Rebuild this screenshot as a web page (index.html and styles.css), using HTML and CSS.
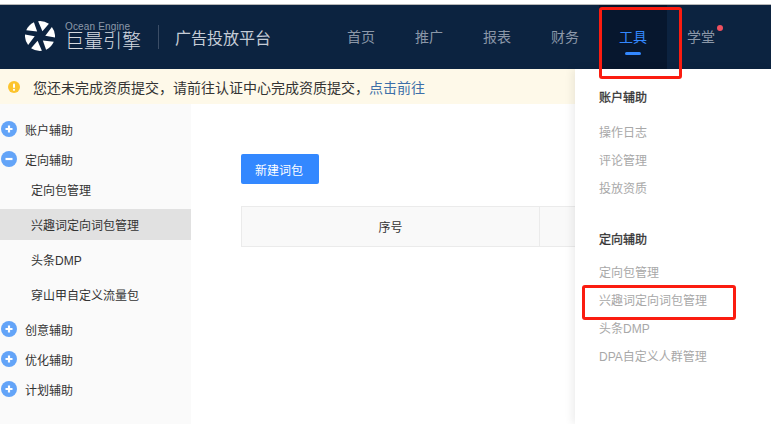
FILE: index.html
```html
<!DOCTYPE html>
<html lang="zh-CN">
<head>
<meta charset="utf-8">
<title>巨量引擎 广告投放平台</title>
<link rel="stylesheet" href="styles.css">
</head>
<body>
<div class="page">
  <div class="top-strip"></div>
  <header class="header">
    <div class="brand">
      <svg class="brand-mark" viewBox="-16 -16 32 32" aria-hidden="true">
        <g fill="#fff">
          <path d="M-2 -15.8 Q4 -16.6 9.5 -13 L2.6 -5 Z"/>
          <path transform="rotate(60)" d="M-2 -15.8 Q4 -16.6 9.5 -13 L2.6 -5 Z"/>
          <path transform="rotate(120)" d="M-2 -15.8 Q4 -16.6 9.5 -13 L2.6 -5 Z"/>
          <path transform="rotate(180)" d="M-2 -15.8 Q4 -16.6 9.5 -13 L2.6 -5 Z"/>
          <path transform="rotate(240)" d="M-2 -15.8 Q4 -16.6 9.5 -13 L2.6 -5 Z"/>
          <path transform="rotate(300)" d="M-2 -15.8 Q4 -16.6 9.5 -13 L2.6 -5 Z"/>
        </g>
      </svg>
      <div class="brand-words">
        <span class="brand-en">Ocean Engine</span>
        <span class="brand-zh">巨量引擎</span>
      </div>
      <span class="brand-divider"></span>
      <span class="brand-title">广告投放平台</span>
    </div>
    <nav class="nav">
      <a class="nav-item">首页</a>
      <a class="nav-item">推广</a>
      <a class="nav-item">报表</a>
      <a class="nav-item">财务</a>
      <a class="nav-item is-active">工具</a>
      <a class="nav-item has-dot">学堂</a>
    </nav>
  </header>
  <div class="notice">
    <svg class="notice-icon" viewBox="0 0 12 12" aria-hidden="true">
      <circle cx="6" cy="6" r="6" fill="#fcc42e"/>
      <rect x="5" y="2.4" width="2" height="4.6" rx="1" fill="#fff"/>
      <circle cx="6" cy="8.8" r="1.1" fill="#fff"/>
    </svg>
    <span>您还未完成资质提交，请前往认证中心完成资质提交，<a class="notice-link">点击前往</a></span>
  </div>
  <div class="body-row">
    <aside class="sidebar">
      <div class="side-group">
        <span class="toggle"><svg viewBox="0 0 16 16"><circle cx="8" cy="8" r="8" fill="#63a4f8"/><path d="M4.5 8h7M8 4.5v7" stroke="#fff" stroke-width="2.2"/></svg></span>账户辅助
      </div>
      <div class="side-group">
        <span class="toggle"><svg viewBox="0 0 16 16"><circle cx="8" cy="8" r="8" fill="#63a4f8"/><path d="M4.5 8h7" stroke="#fff" stroke-width="2.2"/></svg></span>定向辅助
      </div>
      <div class="side-children">
        <div class="side-child">定向包管理</div>
        <div class="side-child is-current">兴趣词定向词包管理</div>
        <div class="side-child">头条DMP</div>
        <div class="side-child">穿山甲自定义流量包</div>
      </div>
      <div class="side-group">
        <span class="toggle"><svg viewBox="0 0 16 16"><circle cx="8" cy="8" r="8" fill="#63a4f8"/><path d="M4.5 8h7M8 4.5v7" stroke="#fff" stroke-width="2.2"/></svg></span>创意辅助
      </div>
      <div class="side-group">
        <span class="toggle"><svg viewBox="0 0 16 16"><circle cx="8" cy="8" r="8" fill="#63a4f8"/><path d="M4.5 8h7M8 4.5v7" stroke="#fff" stroke-width="2.2"/></svg></span>优化辅助
      </div>
      <div class="side-group">
        <span class="toggle"><svg viewBox="0 0 16 16"><circle cx="8" cy="8" r="8" fill="#63a4f8"/><path d="M4.5 8h7M8 4.5v7" stroke="#fff" stroke-width="2.2"/></svg></span>计划辅助
      </div>
    </aside>
    <main class="main">
      <button class="primary-btn">新建词包</button>
      <div class="table-head">
        <div class="cell cell-index">序号</div>
        <div class="cell cell-rest"></div>
      </div>
    </main>
  </div>
  <div class="dropdown">
    <h4 class="drop-title">账户辅助</h4>
    <a class="drop-item">操作日志</a>
    <a class="drop-item">评论管理</a>
    <a class="drop-item">投放资质</a>
    <h4 class="drop-title drop-title-second">定向辅助</h4>
    <a class="drop-item">定向包管理</a>
    <a class="drop-item">兴趣词定向词包管理</a>
    <a class="drop-item">头条DMP</a>
    <a class="drop-item">DPA自定义人群管理</a>
  </div>
  <div class="mark mark-nav"></div>
  <div class="mark mark-item"></div>
</div>
</body>
</html>
```

FILE: styles.css
```css
* { box-sizing: border-box; }
html, body { margin: 0; padding: 0; background: #fff; }
body { font-family: "Liberation Sans", "Noto Sans CJK SC", sans-serif; font-size: 12px; color: #333; }
.page { position: relative; width: 771px; height: 424px; overflow: hidden; display: flex; flex-direction: column; }

.top-strip { height: 5px; flex: none; background: #fff; border-bottom: 1px solid #b8b8b8; }

.header { height: 64px; flex: none; background: #0c2340; display: flex; align-items: stretch; padding-left: 25px; }
.brand { display: flex; align-items: center; width: 302px; flex: none; padding-bottom: 2px; }
.brand-mark { width: 30px; height: 32px; flex: none; margin-right: 10px; }
.brand-words { display: flex; flex-direction: column; width: 93px; flex: none; color: #fff; }
.brand-en { font-size: 10px; line-height: 11px; letter-spacing: .15px; color: #8d99a9; font-family: "Liberation Sans", sans-serif; }
.brand-zh { font-size: 19px; line-height: 20px; font-weight: 300; color: #d5dae1; }
.brand-divider { width: 1px; height: 24px; background: #3b4d66; flex: none; margin: 2px 16px 0 0; }
.brand-title { font-size: 16px; color: #c5ccd6; white-space: nowrap; padding-top: 1px; }

.nav { display: flex; }
.nav-item { position: relative; width: 68px; display: flex; align-items: center; justify-content: center; font-size: 14px; color: #8b97a8; padding-bottom: 3px; }
.nav-item.is-active { background: #07172e; color: #3388ff; }
.nav-item.is-active::after { content: ""; position: absolute; left: 26px; bottom: 14px; width: 16px; height: 3px; border-radius: 2px; background: #3388ff; }
.nav-item.has-dot::after { content: ""; position: absolute; left: 50px; top: 20px; width: 6px; height: 6px; border-radius: 50%; background: #f0505f; }

.notice { height: 35px; flex: none; background: #fef9e9; display: flex; align-items: center; padding-left: 8px; font-size: 14px; color: #333; }
.notice-icon { width: 12px; height: 12px; flex: none; margin-right: 13px; }
.notice-link { color: #3d6fa8; }

.body-row { flex: 1; display: flex; min-height: 0; }
.sidebar { width: 191px; flex: none; background: #fafafa; padding-top: 11px; }
.side-group { height: 30px; display: flex; align-items: center; color: #333; padding-bottom: 2px; }
.toggle { width: 16px; height: 16px; margin: 0 8px 0 1px; flex: none; display: block; }
.toggle svg { display: block; width: 16px; height: 16px; }
.side-children { margin-top: -1px; padding-bottom: 1px; }
.side-child { height: 31px; margin-bottom: 4px; padding-left: 31px; display: flex; align-items: center; color: #333; }
.side-child.is-current { background: #e1e1e1; }

.main { flex: 1; min-width: 0; padding: 50px 0 0 50px; }
.primary-btn { display: block; width: 78px; height: 30px; padding: 0 2px 0 0; border: 0; border-radius: 2px; background: #3388ff; color: #fff; font: inherit; }
.table-head { display: flex; margin-top: 22px; height: 41px; width: 600px; background: #f9f9f9; border: 1px solid #ebebeb; }
.cell { display: flex; align-items: center; justify-content: center; color: #333; }
.cell-index { width: 298px; border-right: 1px solid #ebebeb; }
.cell-rest { flex: 1; }

.dropdown { position: absolute; left: 575px; top: 69px; width: 196px; height: 355px; background: #fff; box-shadow: -3px 0 8px rgba(0, 0, 0, .07); padding: 21px 0 0 24px; display: flex; flex-direction: column; align-items: flex-start; }
.drop-title { margin: 0; font-size: 12px; line-height: 16px; font-weight: 400; color: #333; -webkit-text-stroke: .3px #333; }
.drop-title-second { margin-top: 29px; margin-bottom: 1px; }
.drop-item { height: 28px; line-height: 28px; color: #a8a8a8; }
.drop-title + .drop-item { margin-top: 13px; }
.drop-title-second + .drop-item { margin-top: 10px; }

.mark { position: absolute; border: 3px solid #fb1c10; border-radius: 3px; }
.mark-nav { left: 599px; top: 7px; width: 83px; height: 72px; }
.mark-item { left: 582px; top: 285px; width: 154px; height: 35px; }
```
